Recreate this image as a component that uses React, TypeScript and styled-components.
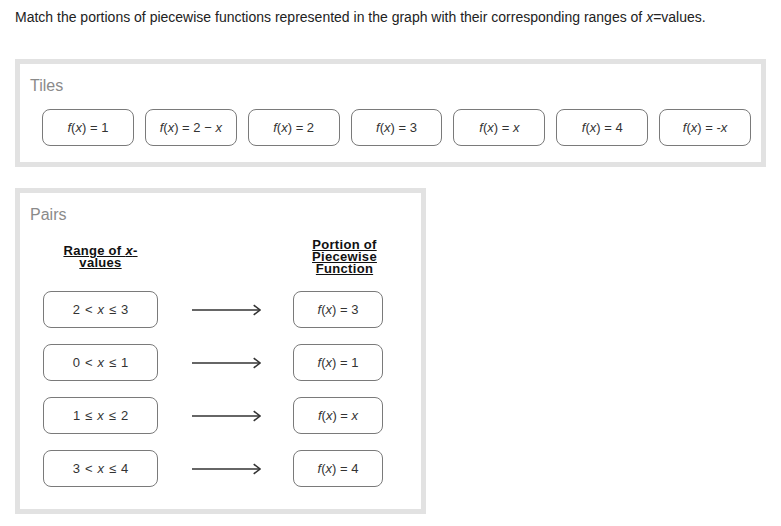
import React from "react";
import styled, { createGlobalStyle } from "styled-components";

const Global = createGlobalStyle`
  html, body { margin: 0; padding: 0; background: #fff; }
  body { font-family: "Liberation Sans", Arial, sans-serif; color: #333; }
`;

const Page = styled.div`
  padding: 8px 0 0 15px;
  width: 751px;
`;

const Prompt = styled.p`
  margin: 0;
  font-size: 14px;
  line-height: 19px;
  color: #222;
`;

const Panel = styled.section<{ $w: number; $mt: number }>`
  box-sizing: border-box;
  width: ${(p) => p.$w}px;
  margin-top: ${(p) => p.$mt}px;
  border: 5px solid #e2e2e2;
  padding: 12px 10px 0 10px;
`;

const PanelTitle = styled.h2`
  margin: 0;
  font-size: 16px;
  font-weight: normal;
  line-height: 20px;
  color: #8a8a8a;
`;

const TileRow = styled.div`
  display: flex;
  gap: 11px;
  margin: 13px 0 0 12px;
  padding-bottom: 16px;
`;

const Chip = styled.div<{ $w: number; $h?: number }>`
  box-sizing: border-box;
  width: ${(p) => p.$w}px;
  height: ${(p) => p.$h ?? 37}px;
  border: 1px solid #7a7a7a;
  border-radius: 8px;
  display: flex;
  align-items: center;
  justify-content: center;
  font-size: 13px;
  color: #333;
  background: #fff;
  white-space: pre;
`;

const RangeText = styled.span`
  display: inline-flex;
  align-items: baseline;
  gap: 5px;
  font-size: 13px;
`;

const PairsGrid = styled.div`
  display: grid;
  grid-template-columns: 115px 71px 90px;
  column-gap: 32px;
  row-gap: 16px;
  margin: 14px 0 0 13px;
  padding-bottom: 22px;
  align-items: center;
`;

const Header = styled.div<{ $shift?: number }>`
  font-size: 13px;
  font-weight: bold;
  letter-spacing: 0.3px;
  line-height: 12px;
  text-align: center;
  color: #111;
  padding-left: ${(p) => p.$shift ?? 0}px;
  span.u {
    text-decoration: underline;
  }
`;

const ArrowCell = styled.div`
  display: flex;
  align-items: center;
  justify-content: flex-start;
  margin-left: 2px;
`;

const I = styled.i`
  font-style: italic;
`;

const Fx: React.FC<{ rhs: React.ReactNode }> = ({ rhs }) => (
  <span>
    <I>f</I>(<I>x</I>){" = "}
    {rhs}
  </span>
);

const Range: React.FC<{ a: string; op1: string; op2: string; b: string }> = ({ a, op1, op2, b }) => (
  <RangeText>
    <span>{a}</span>
    <span>{op1}</span>
    <I>x</I>
    <span>{op2}</span>
    <span>{b}</span>
  </RangeText>
);

const Arrow = () => (
  <svg width="71" height="12" viewBox="0 0 71 12">
    <line x1="0" y1="6" x2="70" y2="6" stroke="#333" strokeWidth="1.3" />
    <polyline points="63.5,1 70,6 63.5,11" fill="none" stroke="#333" strokeWidth="1.6" />
  </svg>
);

const tiles: React.ReactNode[] = [
  "1",
  <>{"2 − "}<I>x</I></>,
  "2",
  "3",
  <I>x</I>,
  "4",
  <>-<I>x</I></>,
];

const pairs: { range: [string, string, string, string]; fn: React.ReactNode }[] = [
  { range: ["2", "<", "≤", "3"], fn: "3" },
  { range: ["0", "<", "≤", "1"], fn: "1" },
  { range: ["1", "≤", "≤", "2"], fn: <I>x</I> },
  { range: ["3", "<", "≤", "4"], fn: "4" },
];

export default function App() {
  return (
    <>
      <Global />
      <Page>
        <Prompt>
          Match the portions of piecewise functions represented in the graph with their corresponding
          ranges of <I>x</I>=values.
        </Prompt>

        <Panel $w={751} $mt={32}>
          <PanelTitle>Tiles</PanelTitle>
          <TileRow>
            {tiles.map((t, i) => (
              <Chip key={i} $w={92}>
                <Fx rhs={t} />
              </Chip>
            ))}
          </TileRow>
        </Panel>

        <Panel $w={411} $mt={21}>
          <PanelTitle>Pairs</PanelTitle>
          <PairsGrid>
            <Header>
              <span className="u">
                Range of <I>x</I>-
              </span>
              <br />
              <span className="u">values</span>
            </Header>
            <div />
            <Header $shift={13}>
              <span className="u">Portion of</span>
              <br />
              <span className="u">Piecewise</span>
              <br />
              <span className="u">Function</span>
            </Header>
            {pairs.map((p, i) => (
              <React.Fragment key={i}>
                <Chip $w={115}>
                  <Range a={p.range[0]} op1={p.range[1]} op2={p.range[2]} b={p.range[3]} />
                </Chip>
                <ArrowCell>
                  <Arrow />
                </ArrowCell>
                <Chip $w={90}>
                  <Fx rhs={p.fn} />
                </Chip>
              </React.Fragment>
            ))}
          </PairsGrid>
        </Panel>
      </Page>
    </>
  );
}
